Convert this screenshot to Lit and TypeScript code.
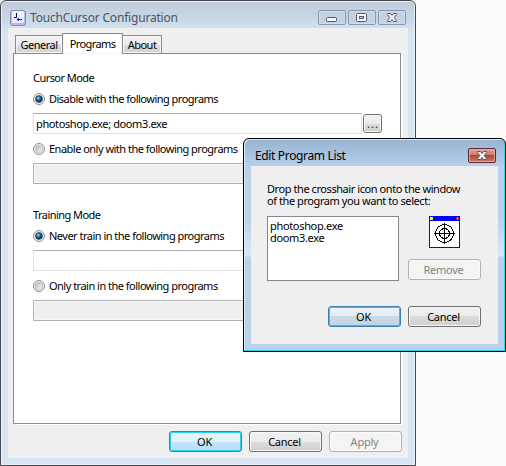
import { LitElement, html, svg, css } from "lit";
import { customElement, property } from "lit/decorators.js";

@customElement("push-button")
class PushButton extends LitElement {
  @property() kind = "normal";
  @property() label = "";
  static styles = css`
    :host { display: block; width: 73px; height: 21px; letter-spacing: -.25px; }
    .b { box-sizing: border-box; width: 100%; height: 100%; border: 1px solid #707070; border-radius: 3px;
      display: flex; align-items: center; justify-content: center; color: #000; padding-right: 2px;
      background: linear-gradient(#f2f2f2 0, #ebebeb 50%, #dddddd 50%, #cfcfcf 100%);
      box-shadow: inset 0 0 0 1px #f8f8f8; }
    .default { border-color: #3c7fb1; box-shadow: inset 0 0 0 1px #2bd2f6;
      background: linear-gradient(#e8f5fc 0, #def2fb 50%, #c4e7f9 50%, #b4dff5 100%); }
    .pulse { border-color: #3c7fb1; box-shadow: inset 0 0 0 1px #2bc6ee;
      background: linear-gradient(#edf2f5 0, #e4ecf2 50%, #cbdbe6 50%, #bfd3df 100%); }
    .disabled { border-color: #adb2b5; background: #f4f4f4; color: #838383; box-shadow: inset 0 0 0 1px #fbfbfb; }
  `;
  render() { return html`<div class="b ${this.kind}"><span>${this.label}</span></div>`; }
}

@customElement("radio-row")
class RadioRow extends LitElement {
  @property({ type: Boolean }) on = false;
  static styles = css`
    :host { display: flex; align-items: center; height: 13px; gap: 4px; white-space: nowrap; letter-spacing: -.51px; }
    svg { display: block; width: 12px; height: 12px; flex: none; }
  `;
  render() {
    return html`<svg viewBox="0 0 12 12">
      <defs>
        <linearGradient id="g" x2="1" y2="1"><stop stop-color="#b4b8bb"/><stop offset="1" stop-color="#f8f8f8"/></linearGradient>
        <radialGradient id="d" cx=".38" cy=".35"><stop stop-color="#9be4fb"/><stop offset=".5" stop-color="#2583bd"/><stop offset="1" stop-color="#10385c"/></radialGradient>
      </defs>
      <circle cx="6" cy="6" r="5.5" fill="#f4f4f4" stroke="#8e8f8f"/>
      <circle cx="6" cy="6" r="3.8" fill="url(#g)" stroke="#b9bcbe" stroke-width=".8"/>
      ${this.on ? svg`<circle cx="6" cy="6" r="3.3" fill="url(#d)" stroke="#243c55" stroke-width=".8"/>` : ""}
    </svg><span><slot></slot></span>`;
  }
}

@customElement("app-root")
class AppRoot extends LitElement {
  static styles = css`
    :host { display: block; position: relative; width: 506px; height: 466px; overflow: hidden; background: #fcfcfc;
      font: 11px/13px "Noto Sans", "Open Sans", sans-serif; color: #000; }
    * { box-sizing: border-box; }
    .window { width: 416px; height: 466px; border: 1px solid #484850; border-radius: 6px 6px 0 0; padding: 0 7px 7px;
      display: flex; flex-direction: column; box-shadow: inset 0 0 0 1px #e6eff8;
      background: linear-gradient(#bfcddb 0, #c8d6e4 16px, #d7e4f1 32px, #d7e4f1 100%); }
    .bar { height: 27px; flex: none; display: flex; align-items: center; font-size: 12px; padding-top: 6px; letter-spacing: -.19px; }
    .bar .name { flex: 1; white-space: nowrap; }
    .window > .bar { color: #4b5460; padding-left: 2px; padding-right: 2px; }
    .app-icon { width: 16px; height: 16px; margin-right: 4px; }
    .caps { display: flex; gap: 2px; }
    svg { display: block; }
    .client { flex: 1; background: #efefef; padding: 5px 6px 6px 5px; display: flex; flex-direction: column; }
    .tabs { display: flex; align-items: flex-end; height: 21px; padding-left: 2px; margin-bottom: -1px; position: relative; flex: none; letter-spacing: -.5px; }
    .tab { height: 19px; border: 1px solid #898c95; display: flex; align-items: center; justify-content: center;
      background: linear-gradient(#f3f3f3 0, #ebebeb 50%, #dddddd 50%, #d2d2d2 100%); box-shadow: inset 0 0 0 1px #f6f6f6; }
    .general { width: 48px; }
    .programs { width: 61px; height: 21px; background: #fff; border-bottom: 0; margin-left: -1px; padding-bottom: 2px; letter-spacing: -.6px; }
    .about { width: 40px; margin-left: -1px; }
    .panel { width: 388px; height: 371px; border: 1px solid #898c95; background: #fff; padding: 17px 18px 0 19px; box-shadow: 2px 1px 0 #fff; }
    .heading { height: 13px; letter-spacing: -.55px; }
    .panel radio-row { margin-top: 8px; }
    .row { display: flex; gap: 1px; align-items: center; margin-top: 8px; }
    .field { width: 329px; height: 21px; border: 1px solid #e2e3ea; border-top-color: #abadb3; background: #fff; padding: 3px 2px; border-radius: 1px; letter-spacing: -.38px; }
    .field.off { width: 349px; background: #efefef; border-color: #afafaf; box-shadow: inset 0 0 0 1px #f7f7f7; }
    .second { margin-top: 24px; }
    .more { width: 19px; height: 19px; border: 1px solid #707070; border-radius: 3px; display: flex; align-items: center; justify-content: center; color: #201040; letter-spacing: 1px; padding-left: 1px;
      background: linear-gradient(#f2f2f2 0, #ebebeb 50%, #dddddd 50%, #cfcfcf 100%); box-shadow: inset 0 0 0 1px #f8f8f8; }
    .foot { display: flex; gap: 7px; justify-content: flex-end; margin: 7px 0 0; }
    .dialog { position: absolute; left: 243px; top: 138px; width: 263px; height: 214px; border: 1px solid #000; border-radius: 6px 6px 0 0; padding: 0 7px 7px;
      display: flex; flex-direction: column; box-shadow: inset -1px -1px 0 #2fd4f3, inset 1px 1px 0 #dcebf9;
      background: linear-gradient(#99b4d1 0, #a7c1de 14px, #b9d1ea 28px, #b9d1ea 80px, #dbe8f6 117px, #b9d1ea 118px); }
    .dialog > .bar { padding-left: 4px; padding-right: 2px; letter-spacing: -.35px; }
    .body { flex: 1; background: #efefef; padding: 17px 17px 17px 16px; display: flex; flex-direction: column; }
    .prompt { line-height: 12px; white-space: nowrap; letter-spacing: -.43px; }
    .mid { display: flex; gap: 9px; margin-top: 9px; height: 65px; }
    .list { width: 132px; height: 65px; border: 1px solid #828790; background: #fff; padding: 3px 2px; line-height: 12px; letter-spacing: -.33px; }
    .side { display: flex; flex-direction: column; align-items: center; gap: 11px; }
    .acts { display: flex; gap: 7px; justify-content: flex-end; margin-top: 25px; }
  `;

  cap(glyph: unknown, red = false) {
    return html`<svg width="28" height="15" viewBox="0 0 28 15">
      <defs><linearGradient id="red" x2="0" y2="1"><stop stop-color="#dda79c"/><stop offset=".46" stop-color="#cd7b6d"/><stop offset=".48" stop-color="#b3402c"/><stop offset="1" stop-color="#ce806f"/></linearGradient></defs>
      <rect x=".5" y=".5" width="27" height="14" rx="1.5" fill="${red ? "url(#red)" : "#c3d1e0"}" stroke="${red ? "#572936" : "#8795b4"}"/>
      <rect x="1.5" y="1.5" width="25" height="12" rx=".5" fill="none" stroke="${red ? "#e5b5ac" : "#d3deeb"}" stroke-opacity=".8"/>
      ${glyph}</svg>`;
  }

  cross() {
    return svg`<path d="M9.5 3.5h3l1.5 2 1.5-2h3v1l-2.3 3 2.3 3v1h-3l-1.5-2-1.5 2h-3v-1l2.3-3-2.3-3z" fill="#f5f5f5" stroke="#53586b"/>`;
  }

  render() {
    return html`
      <div class="window">
        <div class="bar">
          <svg class="app-icon" viewBox="0 0 16 16">
            <rect x=".5" y=".5" width="15" height="15" rx="2" fill="#b8b8df" stroke="#8c8cb0"/>
            <rect x="2" y="1" width="12" height="12" rx="1.5" fill="#eeeeff"/>
            <path d="M6.5 3v4.5h-2.500" fill="none" stroke="#111"/>
            <path d="M8 9.500h4" fill="none" stroke="#1717ef"/>
            <path d="M9 7.500v4L6.500 9.500z" fill="#1717ef"/>
          </svg>
          <span class="name">TouchCursor Configuration</span>
          <span class="caps">
            ${this.cap(svg`<rect x="8.5" y="7.5" width="10" height="4" rx="1" fill="#f5f5f5" stroke="#53586b"/>`)}
            ${this.cap(svg`<rect x="8.5" y="3.5" width="10" height="8" rx="1" fill="#f5f5f5" stroke="#53586b"/><rect x="11.5" y="6.5" width="4" height="2" fill="#c3d1e0" stroke="#53586b"/>`)}
            ${this.cap(this.cross())}
          </span>
        </div>
        <div class="client">
          <div class="tabs">
            <div class="tab general">General</div>
            <div class="tab programs">Programs</div>
            <div class="tab about">About</div>
          </div>
          <div class="panel">
            <div class="heading">Cursor Mode</div>
            <radio-row on>Disable with the following programs</radio-row>
            <div class="row"><div class="field">photoshop.exe; doom3.exe</div><div class="more">...</div></div>
            <radio-row>Enable only with the following programs</radio-row>
            <div class="row"><div class="field off"></div></div>
            <div class="heading second">Training Mode</div>
            <radio-row on>Never train in the following programs</radio-row>
            <div class="row"><div class="field"></div></div>
            <radio-row>Only train in the following programs</radio-row>
            <div class="row"><div class="field off"></div></div>
          </div>
          <div class="foot">
            <push-button kind="default" label="OK"></push-button>
            <push-button label="Cancel"></push-button>
            <push-button kind="disabled" label="Apply"></push-button>
          </div>
        </div>
      </div>
      <div class="dialog">
        <div class="bar"><span class="name">Edit Program List</span>${this.cap(this.cross(), true)}</div>
        <div class="body">
          <div class="prompt">Drop the crosshair icon onto the window<br />of the program you want to select:</div>
          <div class="mid">
            <div class="list">photoshop.exe<br />doom3.exe</div>
            <div class="side">
              <svg width="31" height="32" viewBox="0 0 31 32" shape-rendering="crispEdges">
                <rect x=".5" y=".5" width="30" height="31" fill="#fff" stroke="#00f"/>
                <path d="M0 0h31v5H0z" fill="#00f"/>
                <path d="M1 1h3v3H1z" fill="#ff0"/><path d="M27 1h3v3h-3z" fill="#f00"/><path d="M28 2h1v1h-1z" fill="#fff"/>
                <g fill="none" stroke="#000"><circle cx="15.5" cy="17.5" r="9"/><circle cx="15.5" cy="17.5" r="5"/><path d="M5 17.5h21M15.5 7v21"/></g>
              </svg>
              <push-button kind="disabled" label="Remove"></push-button>
            </div>
          </div>
          <div class="acts">
            <push-button kind="pulse" label="OK"></push-button>
            <push-button label="Cancel"></push-button>
          </div>
        </div>
      </div>`;
  }
}
